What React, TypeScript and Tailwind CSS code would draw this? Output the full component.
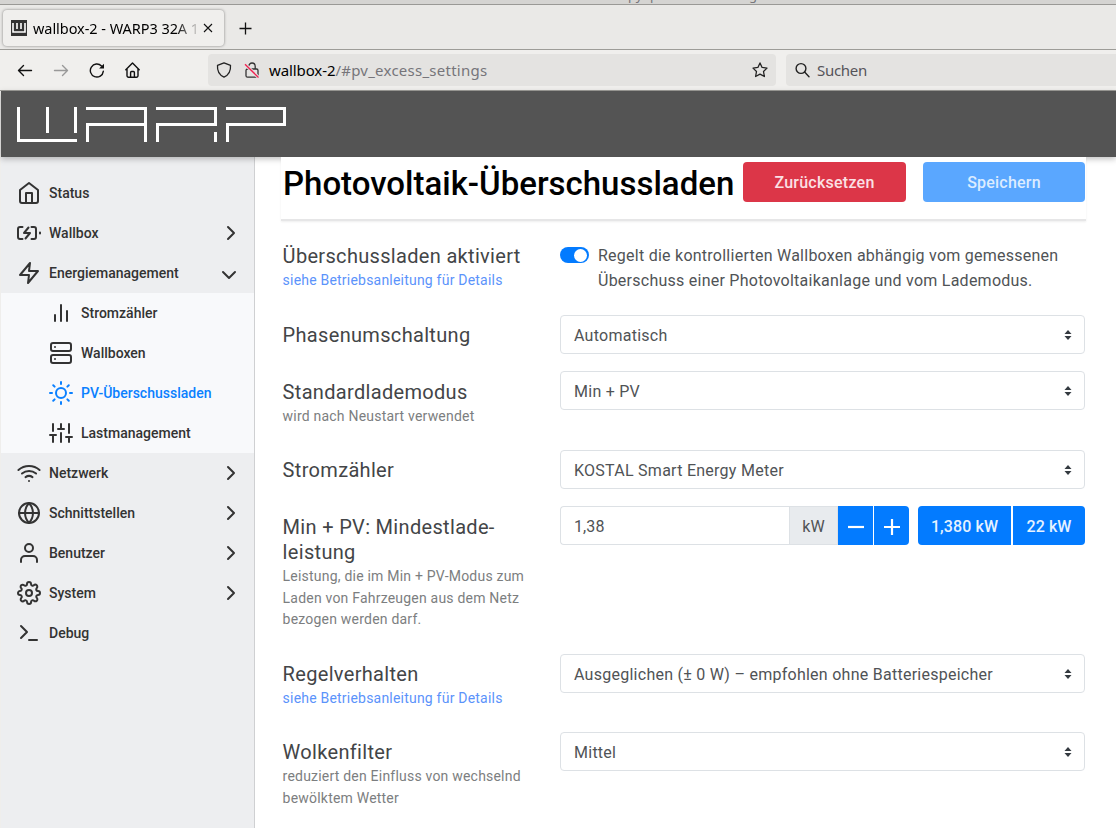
import React from "react";
import {
  FiHome, FiZap, FiBarChart2, FiServer, FiSun, FiSliders, FiWifi, FiGlobe,
  FiUser, FiSettings, FiTerminal, FiChevronRight, FiChevronDown,
} from "react-icons/fi";
import type { IconType } from "react-icons";

function Logo() {
  return (
    <svg width="270" height="36" viewBox="17 107 270 36" fill="#fff" shapeRendering="crispEdges">
      <path d="M17 107h3v32h57v3H17zM46 107h3v26h-3zM74 107h3v26h-3z" />
      <path d="M86 107h61v35h-3v-16H89v16h-3v-19h58v-13H86z" />
      <path d="M156 107h61v19h-58v16h-3v-19h58v-13h-58zM214 132h3v10h-3z" />
      <path d="M226 107h60v19h-57v16h-3v-19h57v-13h-57z" />
    </svg>
  );
}

function ChargeIcon() {
  return (
    <svg width="24" height="24" viewBox="0 0 24 24" fill="none" stroke="currentColor" strokeWidth="2" strokeLinecap="round" strokeLinejoin="round">
      <path d="M5.500 6H3a2 2 0 0 0-2 2v8a2 2 0 0 0 2 2h2.500M14.500 6H17a2 2 0 0 1 2 2v8a2 2 0 0 1-2 2h-2.500M11.500 6.500L7 12h6l-4.500 5.500M23 12.500v-1" />
    </svg>
  );
}

function BrowserChrome() {
  return (
    <div className="flex flex-col text-black">
      <div className="relative h-[5px] shrink-0 overflow-hidden border-b border-[#9a9996] bg-[#d5d4d2] text-[13px] leading-4 text-[#77767b]">
        <span className="absolute -top-[13px] left-[628px]">py</span>
        <span className="absolute -top-[13px] left-[650px]">p</span>
        <span className="absolute -top-[13px] left-[749px]">g</span>
      </div>
      <div className="flex h-[45px] items-center border-b border-[#9d9c98] bg-[#eae9e7] pl-[3px]">
        <div className="mt-px flex h-9 w-[221px] items-center rounded-[4px] bg-[#f0efed] pl-2 shadow-[0_0_3px_rgba(0,0,0,0.45)]">
          <svg width="16" height="16" viewBox="0 0 16 16">
            <rect width="16" height="16" fill="#333" />
            <path d="M2 3v9h12V3M6 3v6M10 3v6" fill="none" stroke="#fff" strokeWidth="1.6" />
          </svg>
          <span className="mt-[2px] ml-[6px] w-[168px] overflow-hidden bg-linear-to-r from-black from-85% to-transparent bg-clip-text text-[14.5px] tracking-[-0.05px] whitespace-nowrap text-transparent">
            wallbox-2 - WARP3 32A 1
          </span>
          <svg className="ml-[2px] shrink-0" width="10" height="10" viewBox="0 0 10 10" stroke="#111" strokeWidth="1.1">
            <path d="M1 1l8 8M9 1L1 9" />
          </svg>
        </div>
        <svg className="mt-[2px] ml-[15px]" width="13" height="13" viewBox="0 0 13 13" stroke="#111" strokeWidth="1.3">
          <path d="M6.500 .5v12M.5 6.500h12" />
        </svg>
      </div>
      <div className="flex h-[41px] items-center border-b border-[#9d9c98] bg-[#f0efed] pl-[17px]">
        <svg width="16" height="16" viewBox="0 0 16 16" fill="none" stroke="#111" strokeWidth="1.4" strokeLinecap="round" strokeLinejoin="round">
          <path d="M14.500 8.500H1.500M6.500 3.500L1.500 8.500l5 5" />
        </svg>
        <svg className="ml-5" width="16" height="16" viewBox="0 0 16 16" fill="none" stroke="#999" strokeWidth="1.4" strokeLinecap="round" strokeLinejoin="round">
          <path d="M1.500 8.500h13M9.500 3.500l5 5-5 5" />
        </svg>
        <svg className="ml-5" width="16" height="16" viewBox="0 0 16 16" fill="none" stroke="#111" strokeWidth="1.4" strokeLinecap="round">
          <path d="M14.300 9.300A6.500 6.500 0 1 1 12.500 4" />
          <path d="M15 1.700v4.900h-4.900z" fill="#111" stroke="none" />
        </svg>
        <svg className="ml-5" width="16" height="16" viewBox="0 0 16 16" fill="none" stroke="#111" strokeWidth="1.4" strokeLinecap="round" strokeLinejoin="round">
          <path d="M.8 7.700L7.500 1l6.700 6.700M2 6.800v7a1.500 1.500 0 0 0 1.500 1.500h8a1.500 1.500 0 0 0 1.500-1.500v-7M5.600 15v-4.500a1 1 0 0 1 1-1h1.800a1 1 0 0 1 1 1V15" />
        </svg>
        <div className="ml-[67px] flex h-8 w-[568px] items-center rounded-[4px] bg-[#e4e3e1] pl-2">
          <svg width="16" height="16" viewBox="0 0 16 16" fill="none" stroke="#222" strokeWidth="1.3" strokeLinejoin="round">
            <path d="M8 .8l6.500 2.600c.4 5.200-1.200 9.300-6.500 11.800C2.700 12.700 1.100 8.600 1.500 3.400z" />
          </svg>
          <svg className="ml-3" width="16" height="16" viewBox="0 0 16 16" fill="none" stroke="#333" strokeWidth="1.3">
            <rect x="2" y="7" width="12" height="8.200" rx="1.500" />
            <path d="M4.800 4.200a3.200 3.200 0 0 1 6.400 0V7" />
            <path d="M1 2.200l13.500 13.300" stroke="#e4e3e1" strokeWidth="3.200" />
            <path d="M1 2.200l13.500 13.300" stroke="#f0204f" strokeWidth="1.3" />
          </svg>
          <span className="ml-[9px] text-[15px] tracking-[-0.1px]">wallbox-2<span className="tracking-[0.25px] text-[#76757a]">/#pv_excess_settings</span></span>
          <svg className="mr-2 ml-auto" width="16" height="16" viewBox="0 0 16 16" fill="none" stroke="#222" strokeWidth="1.3" strokeLinejoin="round">
            <path d="M8 .9l2.100 4.500 4.900.7-3.500 3.400.9 5-4.400-2.400-4.400 2.400.9-5L1 6.100l4.900-.7z" />
          </svg>
        </div>
        <div className="ml-[10px] flex h-8 flex-1 items-center rounded-l-[4px] bg-[#e4e3e1] pl-[9px]">
          <svg width="16" height="16" viewBox="0 0 16 16" fill="none" stroke="#222" strokeWidth="1.400" strokeLinecap="round">
            <circle cx="6" cy="6.500" r="4.900" />
            <path d="M9.600 10.100l4.400 4.600" />
          </svg>
          <span className="ml-[6px] text-[15px] tracking-[-0.3px] text-[#55545a]">Suchen</span>
        </div>
      </div>
    </div>
  );
}

type Item = { label: string; icon: IconType | typeof ChargeIcon; chevron?: boolean };

const topItems: Item[] = [
  { label: "Status", icon: FiHome },
  { label: "Wallbox", icon: ChargeIcon, chevron: true },
];
const subItems: Item[] = [
  { label: "Stromzähler", icon: FiBarChart2 },
  { label: "Wallboxen", icon: FiServer },
  { label: "PV-Überschussladen", icon: FiSun },
  { label: "Lastmanagement", icon: FiSliders },
];
const bottomItems: Item[] = [
  { label: "Netzwerk", icon: FiWifi, chevron: true },
  { label: "Schnittstellen", icon: FiGlobe, chevron: true },
  { label: "Benutzer", icon: FiUser, chevron: true },
  { label: "System", icon: FiSettings, chevron: true },
  { label: "Debug", icon: FiTerminal },
];

function NavRow({ item }: { item: Item }) {
  const Icon = item.icon;
  return (
    <div className="flex h-10 items-center pr-[11px] pl-4">
      <Icon size={24} />
      <span className="ml-2">{item.label}</span>
      {item.chevron && <FiChevronRight size={24} className="ml-auto" />}
    </div>
  );
}

function Sidebar() {
  return (
    <nav className="w-[254px] shrink-0 border-r border-[#cfd0d2] bg-[#edeef0] pt-4 text-[14px] font-medium text-[#333]">
      {topItems.map((i) => <NavRow key={i.label} item={i} />)}
      <div className="flex h-10 items-center pr-[13px] pl-4">
        <FiZap size={24} />
        <span className="ml-2">Energiemanagement</span>
        <FiChevronDown size={24} className="mt-[3px] ml-auto" />
      </div>
      <div className="bg-[#f8f9fb]">
        {subItems.map((i) => {
          const Icon = i.icon;
          return (
            <div key={i.label} className={i.label.startsWith("PV") ? "flex h-10 items-center pl-12 text-[#0a80ff]" : "flex h-10 items-center pl-12"}>
              <Icon size={24} />
              <span className="ml-2">{i.label}</span>
            </div>
          );
        })}
      </div>
      {bottomItems.map((i) => <NavRow key={i.label} item={i} />)}
    </nav>
  );
}

function Select({ value }: { value: string }) {
  return (
    <div className="flex h-[39px] items-center justify-between rounded-[4px] border border-[#dde1e5] bg-white pr-3 pl-[13px] text-[16px] tracking-[0.26px] text-[#505356]">
      <span className="pt-[2px]">{value}</span>
      <svg width="8" height="10" viewBox="0 0 8 10" fill="#343a40"><path d="M.5 4L4 0l3.500 4zM.5 6L4 10l3.500-4z" /></svg>
    </div>
  );
}

type RowProps = {
  h: string;
  pad?: string;
  label: React.ReactNode;
  sub?: React.ReactNode;
  link?: boolean;
  children: React.ReactNode;
};

function Row({ h, pad = "pt-2", label, sub, link, children }: RowProps) {
  return (
    <div className={`flex ${h}`}>
      <div className={`w-[278px] shrink-0 pl-[0.6px] whitespace-nowrap ${pad}`}>
        <div className="text-[20px] leading-[25px] tracking-[0.32px] text-[#434547]">{label}</div>
        {sub && (
          <div className={`mt-px text-[14px] leading-[21.700px] tracking-[0.21px] ${link ? "text-[#5b93fb]" : "text-[#7c7e80]"}`}>{sub}</div>
        )}
      </div>
      <div className="w-[525px]">{children}</div>
    </div>
  );
}

function Content() {
  return (
    <main className="min-w-0 flex-1 bg-white pl-[26px]">
      <div className="relative z-20 flex h-16 w-[805px] items-start border-b-2 border-[#e6e6e7] bg-white pt-[5px] shadow-[0_1px_2px_rgba(0,0,0,0.07)]">
        <h1 className="mt-[2px] w-[462px] pl-[2px] text-[33px] leading-10 font-medium tracking-[0px] whitespace-nowrap text-black">Photovoltaik-Überschussladen</h1>
        <button className="h-10 w-[163px] rounded-[4px] bg-[#dc3648] pt-[2px] text-[16px] font-medium tracking-[0.25px] text-[#fbe0e4]">Zurücksetzen</button>
        <button className="ml-[17px] h-10 w-[162px] rounded-[4px] bg-[#5aa7ff] pt-[2px] text-[16px] font-medium tracking-[0.2px] text-[#dcecff]">Speichern</button>
      </div>
      <div className="mt-[16px] pl-px">
        <Row h="h-[78px]" pad="pt-[7px]" label="Überschussladen aktiviert" sub="siehe Betriebsanleitung für Details" link>
          <div className="flex pt-[6px]">
            <div className="mt-1 flex h-4 w-[29px] shrink-0 items-center justify-end rounded-full bg-[#037bff] pr-[2px]">
              <div className="size-[13px] rounded-full bg-white" />
            </div>
            <p className="ml-[9px] text-[16px] leading-[25px] tracking-[0.25px] whitespace-nowrap text-[#505356]">
              Regelt die kontrollierten Wallboxen abhängig vom gemessenen<br />Überschuss einer Photovoltaikanlage und vom Lademodus.
            </p>
          </div>
        </Row>
        <Row h="h-[56px]" label="Phasenumschaltung"><Select value="Automatisch" /></Row>
        <Row h="h-[79px]" pad="pt-[9px]" label="Standardlademodus" sub="wird nach Neustart verwendet"><Select value="Min + PV" /></Row>
        <Row h="h-[56px]" label="Stromzähler"><Select value="KOSTAL Smart Energy Meter" /></Row>
        <Row
          h="h-[148px]"
          pad="pt-[9px]"
          label={<>Min + PV: Mindestlade-<br />leistung</>}
          sub={<>Leistung, die im Min + PV-Modus zum<br />Laden von Fahrzeugen aus dem Netz<br />bezogen werden darf.</>}
        >
          <div className="flex h-[39px] text-[16px] tracking-[0.1px] text-[#505356]">
            <div className="flex w-[229px] items-center rounded-l-[4px] border border-r-0 border-[#dde1e5] pt-[2px] pl-[13px]">1,38</div>
            <div className="flex w-[49px] items-center justify-center border border-[#dde1e5] bg-[#e8ebee] pt-[2px]">kW</div>
            <div className="flex w-[35px] items-center justify-center bg-[#037bff] pt-[3px]">
              <svg width="16" height="16" viewBox="0 0 16 16" stroke="#fff" strokeWidth="2.200"><path d="M0 8h16" /></svg>
            </div>
            <div className="ml-px flex w-[35px] items-center justify-center rounded-r-[4px] bg-[#037bff] pt-[3px]">
              <svg width="16" height="18" viewBox="0 0 16 18" stroke="#fff" strokeWidth="2.200"><path d="M0 9h16M8 1v16" /></svg>
            </div>
            <div className="ml-[9px] flex w-[93px] items-center justify-center rounded-l-[4px] bg-[#037bff] pt-[2px] font-medium text-[#e6f2ff]">1,380 kW</div>
            <div className="ml-[2px] flex w-[72px] items-center justify-center rounded-r-[4px] bg-[#037bff] pt-[2px] font-medium text-[#e6f2ff]">22 kW</div>
          </div>
        </Row>
        <Row h="h-[78px]" label="Regelverhalten" sub="siehe Betriebsanleitung für Details" link><Select value="Ausgeglichen (± 0 W) – empfohlen ohne Batteriespeicher" /></Row>
        <Row h="h-[96px]" label="Wolkenfilter" sub={<>reduziert den Einfluss von wechselnd<br />bewölktem Wetter</>}><Select value="Mittel" /></Row>
      </div>
    </main>
  );
}

export default function App() {
  return (
    <div className="flex h-[828px] w-[1116px] flex-col overflow-hidden bg-[#efeeec] font-['Noto_Sans',sans-serif]">
      <BrowserChrome />
      <div className="ml-px flex min-h-0 flex-1 flex-col font-[Roboto,sans-serif]">
        <header className="z-10 flex h-[66px] shrink-0 bg-[#545454] pt-4 pl-4 shadow-[0_2px_6px_rgba(0,0,0,0.25)]">
          <Logo />
        </header>
        <div className="flex min-h-0 flex-1">
          <Sidebar />
          <Content />
        </div>
      </div>
    </div>
  );
}
